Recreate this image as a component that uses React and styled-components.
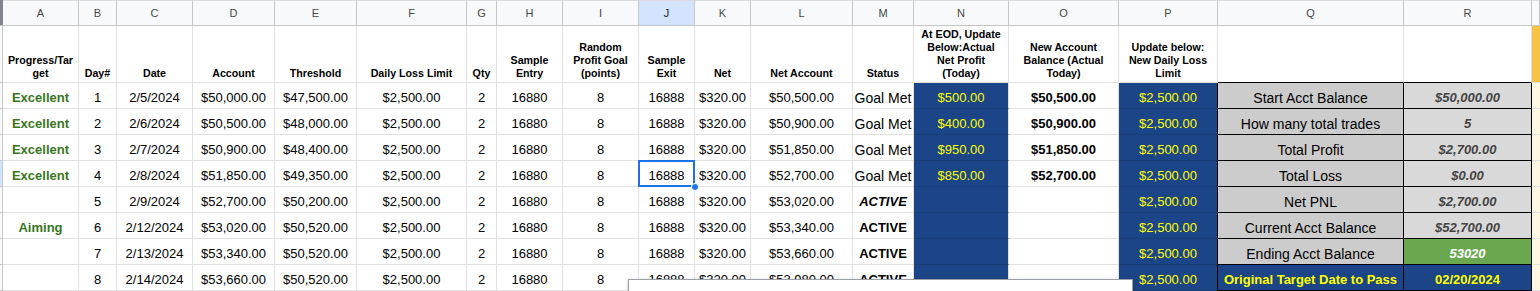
import React from "react";
import styled, { createGlobalStyle } from "styled-components";

const GlobalStyle = createGlobalStyle`
  html, body {
    margin: 0;
    padding: 0;
    background: #fff;
    overflow: hidden;
  }
  body {
    font-family: "Liberation Sans", Arial, sans-serif;
  }
`;

const COLS = [3, 76, 38, 76, 82, 82, 110, 30, 66, 76, 56, 56, 102, 61, 95, 110, 99, 186, 128, 8];
const LETTERS = "ABCDEFGHIJKLMNOPQR".split("");
const GRID = "#e1e1e1";
const BLUE = "#1c4587";
const YELLOW = "#ffff00";

const LABELS = [
  ["Progress/Tar", "get"],
  ["Day#"],
  ["Date"],
  ["Account"],
  ["Threshold"],
  ["Daily Loss Limit"],
  ["Qty"],
  ["Sample", "Entry"],
  ["Random", "Profit Goal", "(points)"],
  ["Sample", "Exit"],
  ["Net"],
  ["Net Account"],
  ["Status"],
  ["At EOD, Update", "Below:Actual", "Net Profit", "(Today)"],
  ["New Account", "Balance (Actual", "Today)"],
  ["Update below:", "New Daily Loss", "Limit"],
  [],
  [],
];

const ROWS = [
  { prog: "Excellent", day: 1, date: "2/5/2024", acct: "$50,000.00", thr: "$47,500.00", netAcct: "$50,500.00", status: "Goal Met", eod: "$500.00", bal: "$50,500.00", label: "Start Acct Balance", value: "$50,000.00" },
  { prog: "Excellent", day: 2, date: "2/6/2024", acct: "$50,500.00", thr: "$48,000.00", netAcct: "$50,900.00", status: "Goal Met", eod: "$400.00", bal: "$50,900.00", label: "How many total trades", value: "5" },
  { prog: "Excellent", day: 3, date: "2/7/2024", acct: "$50,900.00", thr: "$48,400.00", netAcct: "$51,850.00", status: "Goal Met", eod: "$950.00", bal: "$51,850.00", label: "Total Profit", value: "$2,700.00" },
  { prog: "Excellent", day: 4, date: "2/8/2024", acct: "$51,850.00", thr: "$49,350.00", netAcct: "$52,700.00", status: "Goal Met", eod: "$850.00", bal: "$52,700.00", label: "Total Loss", value: "$0.00" },
  { prog: "", day: 5, date: "2/9/2024", acct: "$52,700.00", thr: "$50,200.00", netAcct: "$53,020.00", status: "ACTIVE", italic: true, label: "Net PNL", value: "$2,700.00" },
  { prog: "Aiming", day: 6, date: "2/12/2024", acct: "$53,020.00", thr: "$50,520.00", netAcct: "$53,340.00", status: "ACTIVE", label: "Current Acct Balance", value: "$52,700.00" },
  { prog: "", day: 7, date: "2/13/2024", acct: "$53,340.00", thr: "$50,520.00", netAcct: "$53,660.00", status: "ACTIVE", label: "Ending Acct Balance", value: "53020", kind: "green" },
  { prog: "", day: 8, date: "2/14/2024", acct: "$53,660.00", thr: "$50,520.00", netAcct: "$53,980.00", status: "ACTIVE", label: "Original Target Date to Pass", value: "02/20/2024", kind: "target" },
];

const Sheet = styled.div`
  position: relative;
  display: grid;
  grid-template-columns: ${COLS.map((w) => `${w}px`).join(" ")};
  grid-template-rows: 26px 57px repeat(8, 26px);
  width: 1540px;
  height: 291px;
  overflow: hidden;
  font-family: "Liberation Sans", Arial, sans-serif;
`;

const Corner = styled.div`
  background: #80868b;
  border-bottom: 1px solid #c4c7c5;
`;

const ColHead = styled.div`
  display: flex;
  align-items: center;
  justify-content: center;
  box-sizing: border-box;
  background: ${(p) => (p.$active ? "#d3e3fd" : "#f8f9fa")};
  color: ${(p) => (p.$active ? "#1f1f1f" : "#444746")};
  font-size: 11px;
  border-top: 1px solid #dadce0;
  border-right: 1px solid #c4c7c5;
  border-bottom: 1px solid #c4c7c5;
`;

const RowTab = styled.div`
  box-sizing: border-box;
  background: ${(p) => (p.$selected ? "#d3e3fd" : "#f8f9fa")};
  border-right: 1px solid #c4c7c5;
  border-bottom: 1px solid #c4c7c5;
`;

const LabelCell = styled.div`
  display: flex;
  flex-direction: column;
  justify-content: flex-end;
  align-items: center;
  box-sizing: border-box;
  padding: 0 2px 2px;
  background: #fff;
  font-size: 10.67px;
  font-weight: 700;
  line-height: 13px;
  text-align: center;
  white-space: nowrap;
  overflow: hidden;
  color: #000;
  border-right: 1px solid ${GRID};
  border-bottom: 1px solid ${(p) => (p.$boxed ? "#000" : GRID)};
`;

const Cell = styled.div`
  position: relative;
  display: flex;
  align-items: flex-end;
  justify-content: center;
  box-sizing: border-box;
  padding: 0 2px 2px;
  overflow: hidden;
  white-space: nowrap;
  font-size: 13px;
  line-height: 16px;
  color: #000;
  background: #fff;
  border-right: 1px solid ${(p) => p.$rb || GRID};
  border-bottom: 1px solid ${GRID};
`;

const Progress = styled(Cell)`
  font-weight: 700;
  color: #38761d;
`;

const StatusCell = styled(Cell)`
  font-size: ${(p) => (p.$active ? 13 : 14)}px;
  font-weight: ${(p) => (p.$active ? 700 : 400)};
  font-style: ${(p) => (p.$italic ? "italic" : "normal")};
`;

const FillCell = styled(Cell)`
  background: ${BLUE};
  color: ${YELLOW};
  border-bottom-color: #183d79;
`;

const BalanceCell = styled(Cell)`
  font-weight: 700;
`;

const SelectedCell = styled(Cell)`
  overflow: visible;
  z-index: 2;
`;

const Selection = styled.div`
  position: absolute;
  left: -1px;
  top: -1px;
  right: -1px;
  bottom: -1px;
  border: 2px solid #1a73e8;
  pointer-events: none;
`;

const Handle = styled.div`
  position: absolute;
  right: -5px;
  bottom: -5px;
  width: 8px;
  height: 8px;
  border-radius: 50%;
  background: #1a73e8;
  border: 1px solid #fff;
  box-sizing: border-box;
`;

const SummaryLabel = styled(Cell)`
  background: ${(p) => (p.$target ? BLUE : "#cccccc")};
  color: ${(p) => (p.$target ? YELLOW : "#000")};
  font-size: ${(p) => (p.$target ? 13 : 14)}px;
  font-weight: ${(p) => (p.$target ? 700 : 400)};
  border-right: 1px solid #000;
  border-bottom: 1px solid #000;
`;

const valueBg = { green: "#6aa84f", target: BLUE };
const valueColor = { green: "#ffffff", target: YELLOW };

const SummaryValue = styled(Cell)`
  background: ${(p) => valueBg[p.$kind] || "#d9d9d9"};
  color: ${(p) => valueColor[p.$kind] || "#434343"};
  font-weight: 700;
  font-style: ${(p) => (p.$kind === "target" ? "normal" : "italic")};
  border-right: 1px solid #000;
  border-bottom: 1px solid #000;
`;

const EdgeCell = styled.div`
  box-sizing: border-box;
  background: ${(p) => (p.$top ? "#f5c445" : "#fef7e1")};
  border-bottom: 1px solid ${GRID};
`;

const Popup = styled.div`
  position: absolute;
  left: 628px;
  top: 279px;
  width: 505px;
  height: 40px;
  box-sizing: border-box;
  background: #fff;
  border: 1px solid #9aa0a6;
  box-shadow: 0 1px 3px rgba(0, 0, 0, 0.25);
  z-index: 3;
`;

function DataRow({ row, index }) {
  const selected = index === 3;
  return (
    <>
      <RowTab $selected={selected} />
      <Progress>{row.prog}</Progress>
      <Cell>{row.day}</Cell>
      <Cell>{row.date}</Cell>
      <Cell>{row.acct}</Cell>
      <Cell>{row.thr}</Cell>
      <Cell>$2,500.00</Cell>
      <Cell>2</Cell>
      <Cell>16880</Cell>
      <Cell>8</Cell>
      {selected ? (
        <SelectedCell>
          16888
          <Selection />
          <Handle />
        </SelectedCell>
      ) : (
        <Cell>16888</Cell>
      )}
      <Cell>$320.00</Cell>
      <Cell>{row.netAcct}</Cell>
      <StatusCell $active={row.status === "ACTIVE"} $italic={row.italic}>
        {row.status}
      </StatusCell>
      <FillCell>{row.eod}</FillCell>
      <BalanceCell>{row.bal}</BalanceCell>
      <FillCell $rb="#000">$2,500.00</FillCell>
      <SummaryLabel $target={row.kind === "target"}>{row.label}</SummaryLabel>
      <SummaryValue $kind={row.kind}>{row.value}</SummaryValue>
      <EdgeCell />
    </>
  );
}

export default function App() {
  return (
    <>
      <GlobalStyle />
      <Sheet>
        <Corner />
        {LETTERS.map((l) => (
          <ColHead key={l} $active={l === "J"}>
            {l}
          </ColHead>
        ))}
        <ColHead />

        <RowTab />
        {LABELS.map((lines, i) => (
          <LabelCell key={i} $boxed={i >= 16}>
            {lines.map((t) => (
              <span key={t}>{t}</span>
            ))}
          </LabelCell>
        ))}
        <EdgeCell $top />

        {ROWS.map((row, i) => (
          <DataRow key={i} row={row} index={i} />
        ))}
        <Popup />
      </Sheet>
    </>
  );
}
